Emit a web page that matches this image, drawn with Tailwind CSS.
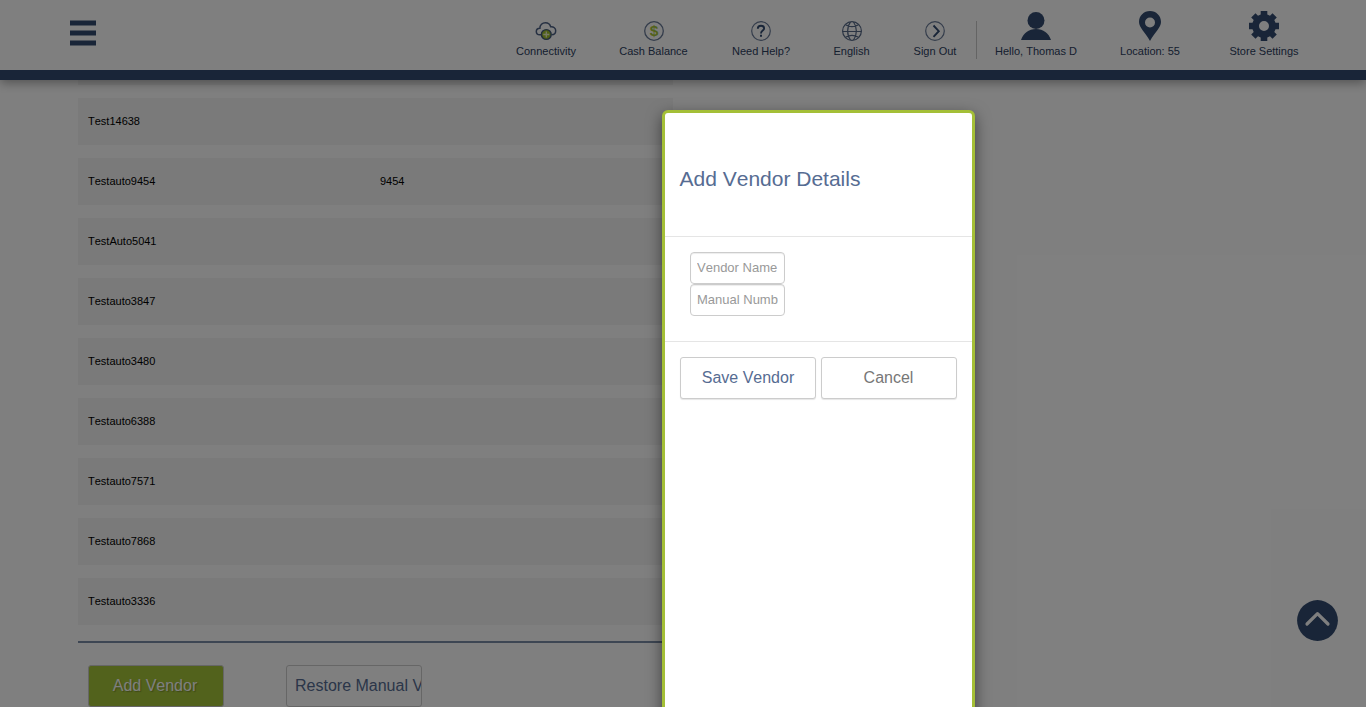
<!DOCTYPE html>
<html lang="en">
<head>
<meta charset="utf-8">
<title>Vendors</title>
<script src="https://cdn.jsdelivr.net/npm/@tailwindcss/browser@4"></script>
</head>
<body class="h-[707px] overflow-hidden bg-white font-['Liberation_Sans',Arial,sans-serif] text-[11px] leading-[14px] [font-kerning:none]">
<div class="relative h-[707px] overflow-hidden">
  <header class="relative z-10 flex h-20 items-start border-b-[10px] border-[#324b70] bg-white pl-[70px] text-[#2c405e] shadow-[0_3px_10px_rgba(0,0,0,0.35)]">
    <button class="mt-5" aria-label="Menu">
      <svg class="block h-[26px] w-[26px]" viewBox="0 0 26 26" fill="#324b70"><path d="M0 .5h26v5H0zM0 10.500h26v5H0zM0 20.500h26v5H0z"/></svg>
    </button>
    <nav class="ml-[420px] flex h-[58px] items-end whitespace-nowrap">
      <a class="flex w-[60px] flex-col items-center gap-[2px]">
        <svg class="h-[22px] w-[22px]" viewBox="0 0 22 22" fill="none"><path d="M6.300 14.800H4.800C2.600 14.800 1.300 13.300 1.300 11.500C1.300 9.600 2.700 8.300 4.900 8.200C4.800 4.900 7.300 2.700 10.400 2.700C13.100 2.700 15 4.200 15.700 6.700C18.700 6.400 20.700 8.300 20.700 10.800C20.700 13.200 19 14.800 16.600 14.800" stroke="#4d6185" stroke-width="1.500"/><circle cx="11.300" cy="14.500" r="4.900" fill="#a0c02c" stroke="#435a7b" stroke-width="1.400"/><path d="M11.300 11.500v6M8.300 14.500h6" stroke="#eef5c8" stroke-width="1.300"/></svg>
        Connectivity</a>
      <a class="ml-[43px] flex w-[69px] flex-col items-center gap-[2px]">
        <svg class="h-[22px] w-[22px]" viewBox="0 0 22 22"><circle cx="11" cy="11" r="9.300" fill="none" stroke="#697a97" stroke-width="1.300"/><text x="11" y="16.300" text-anchor="middle" font-size="15.500" font-weight="bold" fill="#a5c438">$</text></svg>
        Cash Balance</a>
      <a class="ml-[44px] flex w-[58px] flex-col items-center gap-[2px]">
        <svg class="h-[22px] w-[22px]" viewBox="0 0 22 22" fill="none"><circle cx="11" cy="11" r="9.300" stroke="#697a97" stroke-width="1.200"/><path d="M7.800 8.800C7.800 6.800 9.100 5.700 11 5.700C12.900 5.700 14.100 6.800 14.100 8.400C14.100 10.600 11 10.500 11 13.400" stroke="#324b70" stroke-width="1.900"/><path d="M10 14.800h2v2H10z" fill="#324b70"/></svg>
        Need Help?</a>
      <a class="ml-[44px] flex w-[35px] flex-col items-center gap-[2px]">
        <svg class="h-[22px] w-[22px]" viewBox="0 0 22 22" fill="none" stroke="#566987" stroke-width="1.200"><circle cx="11" cy="11" r="9.400"/><path d="M1.600 11.500h18.800M9.500 2C5.700 7 5.700 15 9.500 20M12.500 2C16.300 7 16.300 15 12.500 20M4.500 4.800C8.400 7 13.600 7 17.500 4.800M4.500 17.200C8.400 15 13.600 15 17.500 17.200"/></svg>
        English</a>
      <a class="ml-[45px] flex w-[42px] flex-col items-center gap-[2px]">
        <svg class="h-[22px] w-[22px]" viewBox="0 0 22 22" fill="none"><circle cx="11" cy="11" r="9.300" stroke="#697a97" stroke-width="1.200"/><path d="M9.500 5.500L14.800 11.200L9.500 16.900" stroke="#324b70" stroke-width="1.900"/></svg>
        Sign Out</a>
      <span class="ml-5 h-[38px] w-px translate-y-px bg-[#c9c9c9]"></span>
      <a class="ml-[18px] flex w-[82px] flex-col items-center gap-[2px]">
        <svg class="h-[32px] w-[32px]" viewBox="0 0 32 32" fill="#324b70"><circle cx="16" cy="10.600" r="8.500"/><path d="M1 30C3.500 23 8.500 19 16 19C23.500 19 28.500 23 31 30Z"/></svg>
        Hello, Thomas D</a>
      <a class="ml-[43px] flex w-[60px] flex-col items-center gap-[2px]">
        <svg class="h-[32px] w-[32px]" viewBox="0 0 32 32" fill="#324b70"><path fill-rule="evenodd" d="M16 1C9.800 1 5 5.700 5 12C5 17.500 11 22 16 31C21 22 27 17.500 27 12C27 5.700 22.200 1 16 1ZM16 7.500a5 5 0 1 1 0 10a5 5 0 1 1 0-10Z"/></svg>
        Location: 55</a>
      <a class="ml-[50px] flex w-[68px] flex-col items-center gap-[2px]">
        <svg class="h-[32px] w-[32px]" viewBox="0 0 32 32" fill="#324b70"><path fill-rule="evenodd" d="M12.700 1H19.300V4.500L22 5.700L24.500 3.200L28.800 7.500L26.300 10L27.500 12.700H31V19.300H27.500L26.300 22L28.800 24.500L24.500 28.800L22 26.300L19.300 27.500V31H12.700V27.500L10 26.300L7.500 28.800L3.200 24.500L5.700 22L4.500 19.300H1V12.700H4.500L5.700 10L3.200 7.500L7.500 3.200L10 5.700L12.700 4.500ZM16 11a5 5 0 1 0 0 10a5 5 0 1 0 0-10Z"/></svg>
        Store Settings</a>
    </nav>
  </header>

  <main class="ml-[78px] w-[595px]">
    <div class="flex flex-col gap-[13px] text-black">
      <div class="h-[5px] bg-[#f4f4f4]"></div>
      <div class="flex h-[47px] items-center bg-[#f4f4f4] pb-[2px] pl-[10px]"><span class="w-[292px]">Test14638</span></div>
      <div class="flex h-[47px] items-center bg-[#f4f4f4] pb-[2px] pl-[10px]"><span class="w-[292px]">Testauto9454</span><span>9454</span></div>
      <div class="flex h-[47px] items-center bg-[#f4f4f4] pb-[2px] pl-[10px]"><span class="w-[292px]">TestAuto5041</span></div>
      <div class="flex h-[47px] items-center bg-[#f4f4f4] pb-[2px] pl-[10px]"><span class="w-[292px]">Testauto3847</span></div>
      <div class="flex h-[47px] items-center bg-[#f4f4f4] pb-[2px] pl-[10px]"><span class="w-[292px]">Testauto3480</span></div>
      <div class="flex h-[47px] items-center bg-[#f4f4f4] pb-[2px] pl-[10px]"><span class="w-[292px]">Testauto6388</span></div>
      <div class="flex h-[47px] items-center bg-[#f4f4f4] pb-[2px] pl-[10px]"><span class="w-[292px]">Testauto7571</span></div>
      <div class="flex h-[47px] items-center bg-[#f4f4f4] pb-[2px] pl-[10px]"><span class="w-[292px]">Testauto7868</span></div>
      <div class="flex h-[47px] items-center bg-[#f4f4f4] pb-[2px] pl-[10px]"><span class="w-[292px]">Testauto3336</span></div>
    </div>
    <div class="mt-4 h-[2px] bg-[#7b8da6]"></div>
    <div class="flex gap-[62px] pt-[22px] pl-[10px] text-base">
      <button class="h-[42px] w-[136px] rounded-[3px] border border-[#ccc] bg-[#a4c438] pr-[2px] text-white [text-shadow:1px_1px_1px_rgba(0,0,0,0.25)]">Add Vendor</button>
      <button class="h-[42px] w-[136px] overflow-hidden rounded-[3px] border border-[#ccc] bg-white pl-2 text-left whitespace-nowrap text-[#566c92]">Restore Manual Vendor</button>
    </div>
  </main>

  <button class="absolute top-[600px] left-[1297px] z-10" aria-label="Back to top">
    <svg class="h-[41px] w-[41px]" viewBox="0 0 41 41" fill="none"><circle cx="20.500" cy="20.500" r="20.400" fill="#324b70"/><path d="M10 24L20.500 13.600L31 24" stroke="#fff" stroke-width="3.200" stroke-linecap="round" stroke-linejoin="round"/></svg>
  </button>

  <div class="absolute inset-0 z-20 bg-black/50"></div>

  <section class="absolute top-[110px] left-[662px] z-30 h-[640px] w-[313px] rounded-[6px] border-[3px] border-[#a4bf37] bg-white shadow-[0_5px_15px_rgba(0,0,0,0.5)]">
    <div class="h-[124px] border-b border-[#e5e5e5] pt-[53px] pl-[14.500px]">
      <h2 class="text-[21px] leading-[26px] text-[#566c92]">Add Vendor Details</h2>
    </div>
    <div class="flex h-[105px] flex-col border-b border-[#e5e5e5] pt-[15px] pl-[25px] text-[13px]">
      <input class="h-8 w-[95px] rounded-[4px] border border-[#ccc] px-[6px] pb-px shadow-[inset_0_1px_1px_rgba(0,0,0,0.075)] placeholder:text-[#999]" placeholder="Vendor Name">
      <input class="h-8 w-[95px] rounded-[4px] border border-[#ccc] px-[6px] pb-px shadow-[inset_0_1px_1px_rgba(0,0,0,0.075)] placeholder:text-[#999]" placeholder="Manual Number">
    </div>
    <div class="flex gap-[5px] pt-[15px] pl-[15px] text-base">
      <button class="h-[42px] w-[136px] rounded-[3px] border border-[#ccc] bg-white text-[#566c92] shadow-[0_1px_1px_rgba(0,0,0,0.1)]">Save Vendor</button>
      <button class="h-[42px] w-[136px] rounded-[3px] border border-[#ccc] bg-white pr-px text-[#777] shadow-[0_1px_1px_rgba(0,0,0,0.1)]">Cancel</button>
    </div>
  </section>
</div>
</body>
</html>
